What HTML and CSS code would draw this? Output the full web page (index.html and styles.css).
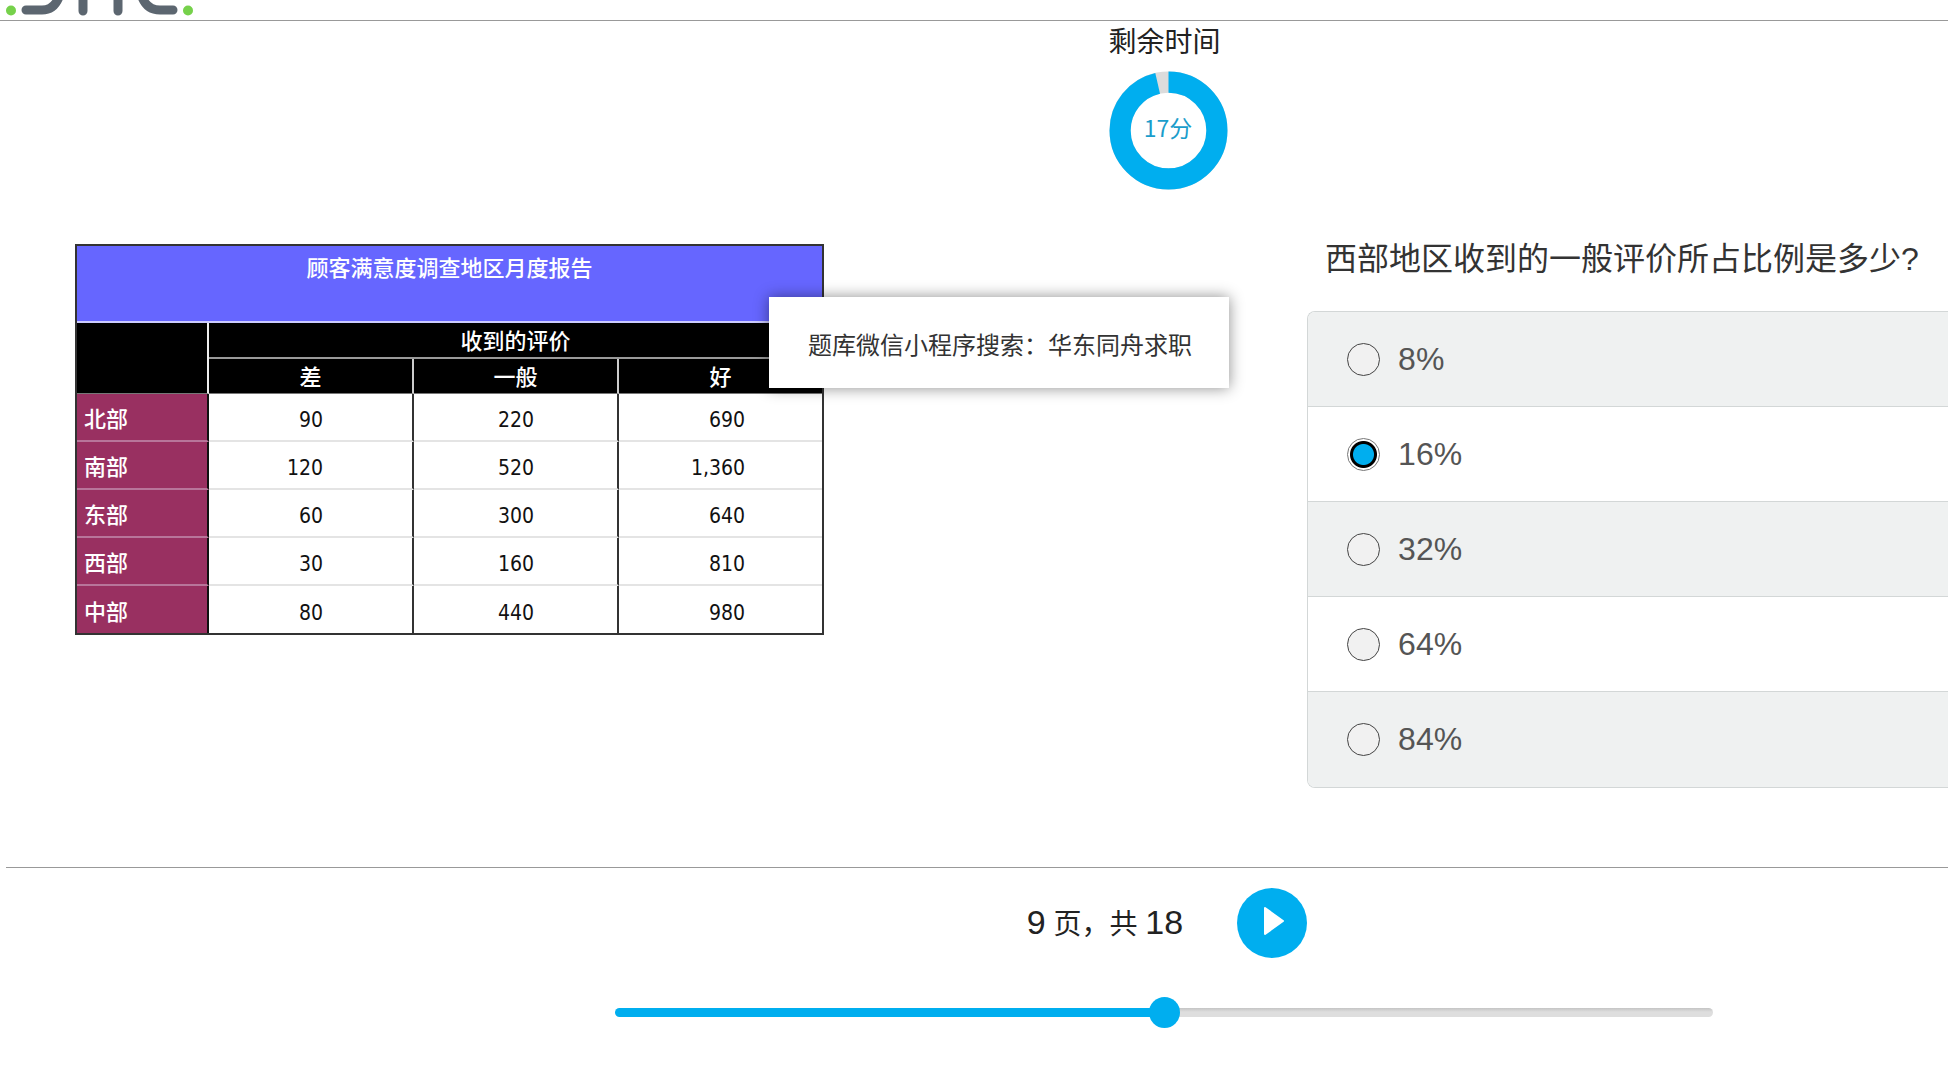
FILE: index.html
```
<!DOCTYPE html>
<html lang="zh-CN">

<head>
    <meta charset="UTF-8">
    <meta name="viewport" content="width=device-width, initial-scale=1.0">
    <title>SHL</title>
    <link rel="stylesheet" href="styles.css">
</head>

<body>
    <header class="header">
        <svg class="logo" width="200" height="20" viewBox="0 0 200 20" aria-label="SHL">
            <g fill="none" stroke="#5c6670" stroke-width="9" stroke-linecap="round">
                <path d="M26 10H42Q54 10 59-3" />
                <path d="M83-4V11M118-4V11" />
                <path d="M142-3Q147 10 160 10H173" />
            </g>
            <circle cx="11" cy="10.5" r="5" fill="#76d14b" />
            <circle cx="188" cy="10.5" r="5" fill="#76d14b" />
        </svg>
    </header>

    <section class="timer">
        <div class="timer-box">
            <div class="timer-title">剩余时间</div>
            <div class="timer-ring">
                <svg width="119" height="119" viewBox="0 0 118 118">
                    <circle cx="59" cy="59" r="48" fill="none" stroke="#dcdcdc" stroke-width="21" />
                    <circle cx="59" cy="59" r="48" fill="none" stroke="#00aeef" stroke-width="21"
                        pathLength="360" stroke-dasharray="347 13" transform="rotate(-90 59 59)" />
                </svg>
                <span class="timer-text">17分</span>
            </div>
        </div>
    </section>

    <main class="content">
        <div class="material">
            <table class="report">
                <colgroup>
                    <col class="col-region">
                    <col class="col-value">
                    <col class="col-value">
                    <col>
                </colgroup>
                <thead>
                    <tr class="report-title">
                        <th colspan="4">顾客满意度调查地区月度报告</th>
                    </tr>
                    <tr class="report-group">
                        <td rowspan="2"></td>
                        <th colspan="3">收到的评价</th>
                    </tr>
                    <tr class="report-cols">
                        <th>差</th>
                        <th>一般</th>
                        <th>好</th>
                    </tr>
                </thead>
                <tbody>
                    <tr><th>北部</th><td>90</td><td>220</td><td>690</td></tr>
                    <tr><th>南部</th><td>120</td><td>520</td><td>1,360</td></tr>
                    <tr><th>东部</th><td>60</td><td>300</td><td>640</td></tr>
                    <tr><th>西部</th><td>30</td><td>160</td><td>810</td></tr>
                    <tr><th>中部</th><td>80</td><td>440</td><td>980</td></tr>
                </tbody>
            </table>
            <div class="popup">题库微信小程序搜索：华东同舟求职</div>
        </div>

        <form class="question">
            <h1 class="question-title">西部地区收到的一般评价所占比例是多少?</h1>
            <div class="options">
                <label class="option"><input type="radio" name="answer" value="8">8%</label>
                <label class="option"><input type="radio" name="answer" value="16" checked>16%</label>
                <label class="option"><input type="radio" name="answer" value="32">32%</label>
                <label class="option"><input type="radio" name="answer" value="64">64%</label>
                <label class="option"><input type="radio" name="answer" value="84">84%</label>
            </div>
        </form>
    </main>

    <footer class="footer">
        <div class="pager">
            <div class="pager-text"><span class="num">9</span> 页，共 <span class="num">18</span></div>
            <button class="next" type="button" aria-label="下一页">
                <svg width="22" height="30" viewBox="0 0 22 30">
                    <path d="M2 2L20 15L2 28Z" fill="#fff" stroke="#fff" stroke-width="2" stroke-linejoin="round" />
                </svg>
            </button>
        </div>
        <input class="progress" type="range" min="0" max="18" value="9" aria-label="进度">
    </footer>
</body>

</html>
```
FILE: styles.css
```
/* General */
* {
    box-sizing: border-box;
}

body {
    margin: 0;
    background-color: #fff;
    color: #222;
    font-family: "Liberation Sans", "Noto Sans CJK SC", sans-serif;
    overflow-x: hidden;
}

/* Header */
.header {
    height: 21px;
    border-bottom: 1px solid #999;
}

.logo {
    display: block;
}

/* Remaining time */
.timer {
    display: flex;
    justify-content: center;
    padding-left: 388px;
}

.timer-title {
    padding-top: 2px;
    font-size: 28px;
    line-height: 40px;
    margin-bottom: 8px;
}

.timer-ring {
    display: grid;
    place-items: center;
}

.timer-ring svg,
.timer-text {
    grid-area: 1 / 1;
}

.timer-ring svg {
    display: block;
}

.timer-text {
    color: #1a9dcb;
    font-family: "Noto Sans CJK SC", sans-serif;
    font-size: 23px;
    line-height: 32px;
    padding-bottom: 8px;
}

/* Main area */
.content {
    display: flex;
    padding: 43px 0 79px;
}

.material {
    position: relative;
    flex: 1;
    padding: 11px 0 0 75px;
}

.report {
    width: 749px;
    table-layout: fixed;
    border: 2px solid #333;
    border-spacing: 0;
    font-family: "DejaVu Sans Condensed", "Noto Sans CJK SC", sans-serif;
    font-size: 21px;
    line-height: 24px;
    color: #111;
}

.col-region {
    width: 132px;
}

.col-value {
    width: 205px;
}

.report th {
    padding: 0 0 2px;
    color: #fff;
    font-family: "Noto Sans CJK SC", sans-serif;
    font-size: 22px;
    font-weight: 500;
}

.report-title th {
    height: 77px;
    padding-top: 8px;
    vertical-align: top;
    background-color: #66f;
    border-bottom: 2px solid #ccf;
}

.report-group {
    height: 36px;
    background-color: #000;
}

.report-group td {
    border-right: 2px solid #eee;
    border-bottom: 1px solid #777;
}

.report-group th {
    border-bottom: 2px solid #999;
}

.report-cols {
    height: 35px;
    background-color: #000;
}

.report-cols th {
    border-right: 2px solid #ccc;
    border-bottom: 1px solid #777;
}

.report-cols th:last-child {
    border-right: 0;
}

.report tbody tr {
    height: 48px;
}

.report tbody th {
    padding: 0 0 0 7px;
    text-align: left;
    background-color: #993061;
    border-right: 2px solid #111;
    border-bottom: 2px solid #b8759a;
}

.report tbody td {
    padding: 6px 89px 0 0;
    text-align: right;
    border-right: 2px solid #333;
    border-bottom: 2px solid #e4e4e4;
}

.report tbody td:nth-child(3) {
    padding-right: 83px;
}

.report tbody td:last-child {
    padding-right: 77px;
    border-right: 0;
}

.report tbody tr:last-child {
    height: 47px;
}

.report tbody tr:last-child > * {
    border-bottom: 0;
}

/* Notice shown over the table */
.popup {
    position: absolute;
    top: 64px;
    left: 769px;
    padding: 33px 37px 26px 39px;
    background-color: #fff;
    box-shadow: 0 0 14px rgba(0, 0, 0, 0.45);
    color: #333;
    font-size: 24px;
    line-height: 32px;
    white-space: nowrap;
}

/* Question */
.question {
    flex: 0 0 32.9%;
}

.question-title {
    margin: 0 0 28px;
    padding: 2px 0 0 18px;
    color: #333;
    font-size: 32px;
    font-weight: 400;
    line-height: 48px;
    white-space: nowrap;
}

.options {
    border: 1px solid #d3d7d7;
    border-right: 0;
    border-radius: 8px 0 0 8px;
    overflow: hidden;
}

.option {
    display: flex;
    align-items: center;
    gap: 18px;
    height: 95px;
    padding-left: 39px;
    color: #555;
    font-size: 32px;
    border-bottom: 1px solid #d3d7d7;
}

.option:nth-child(odd) {
    background-color: #eff1f1;
}

.option:last-child {
    border-bottom: 0;
}

.option input {
    appearance: none;
    width: 33px;
    height: 33px;
    margin: 0;
    border: 1px solid #444;
    border-radius: 50%;
    background-color: #f1f1f1;
}

.option input:checked {
    border-color: #777;
    background: radial-gradient(circle, #00aeef 10px, #000 11px, #000 13px, #fff 14px);
}

/* Footer */
.footer {
    display: flex;
    flex-direction: column;
    align-items: center;
    margin-left: 6px;
    padding: 20px 0 48px 374px;
    border-top: 1px solid #999;
}

.pager {
    display: flex;
    align-items: center;
    gap: 54px;
    padding-left: 6px;
}

.pager-text {
    font-size: 28px;
    line-height: 40px;
}

.num {
    font-size: 34px;
}

.next {
    display: flex;
    align-items: center;
    justify-content: center;
    width: 70px;
    height: 70px;
    padding: 0 0 4px 4px;
    border: 0;
    border-radius: 50%;
    background-color: #00aeef;
    cursor: pointer;
}

.progress {
    appearance: none;
    width: 70%;
    height: 31px;
    margin: 39px 0 0;
    background: none;
}

.progress::-webkit-slider-runnable-track {
    height: 9px;
    border-radius: 5px;
    background: linear-gradient(to right, #00aeef 50%, transparent 50%), linear-gradient(#c4c4c4, #dedede 4px);
}

.progress::-webkit-slider-thumb {
    appearance: none;
    width: 31px;
    height: 31px;
    margin-top: -11px;
    border-radius: 50%;
    background-color: #00aeef;
}
```
